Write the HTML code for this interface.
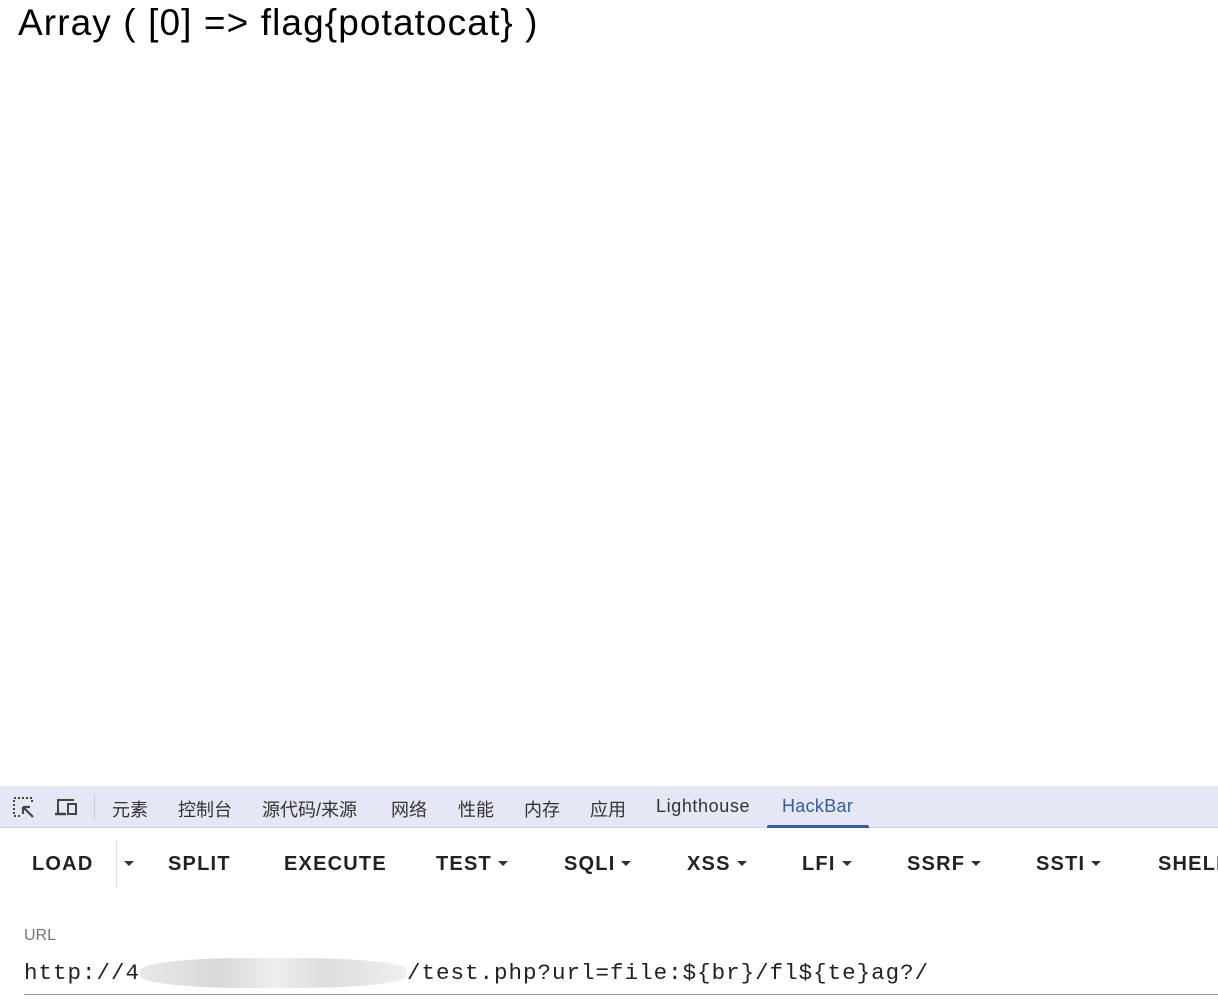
<!DOCTYPE html>
<html><head><meta charset="utf-8"><style>
body{margin:0;width:1218px;height:1004px;background:#fff;position:relative;overflow:hidden;font-family:"Liberation Sans","Noto Sans CJK SC",sans-serif}
.a{position:absolute;white-space:nowrap}
#t{left:18px;top:2px;font-size:37px;color:#000;letter-spacing:1.1px}
#dt{left:0;top:786px;width:1218px;height:41px;background:#e4e8f4;border-bottom:1px solid #d0d4e0}
.tab{top:796px;font-size:18px;color:#333}
.btn{top:853px;font-size:20px;font-weight:bold;letter-spacing:1.2px;color:#222}
.car{display:inline-block;width:0;height:0;border-left:5px solid transparent;border-right:5px solid transparent;border-top:5px solid #333;vertical-align:middle;margin-left:6px;margin-bottom:3px}
</style></head><body>
<div class="a" id="t">Array ( [0] =&gt; flag{potatocat} )</div>
<div class="a" id="dt"></div>
<svg class="a" style="left:12px;top:796px" width="26" height="22" viewBox="0 0 26 22"><rect x="2" y="2" width="18" height="18" fill="none" stroke="#444" stroke-width="2" stroke-dasharray="2 2"/><rect x="8" y="8" width="14" height="14" fill="#e4e8f4"/><path d="M11 11 L21 21 M11 11 V18 M11 11 H18" stroke="#444" stroke-width="2.2" fill="none"/></svg>
<svg class="a" style="left:54px;top:796px" width="26" height="22" viewBox="0 0 26 22"><path d="M4 17 V4 H20" stroke="#444" stroke-width="2" fill="none"/><path d="M1 18 H12" stroke="#444" stroke-width="2.5"/><rect x="14" y="8" width="8" height="10" fill="none" stroke="#444" stroke-width="2"/></svg>
<div class="a" style="left:94px;top:794px;width:1px;height:26px;background:#c8ccd8"></div>
<div class="a tab" style="left:112px">元素</div>
<div class="a tab" style="left:178px">控制台</div>
<div class="a tab" style="left:262px">源代码/来源</div>
<div class="a tab" style="left:391px">网络</div>
<div class="a tab" style="left:458px">性能</div>
<div class="a tab" style="left:524px">内存</div>
<div class="a tab" style="left:590px">应用</div>
<div class="a tab" style="left:656px;letter-spacing:0.6px">Lighthouse</div>
<div class="a tab" style="left:782px;color:#3c5a9a;letter-spacing:0.3px">HackBar</div>
<div class="a" style="left:767px;top:825px;width:102px;height:3px;background:#3c5a9a;border-radius:2px 2px 0 0"></div>
<div class="a btn" style="left:32px">LOAD</div>
<div class="a" style="left:116px;top:840px;width:1px;height:48px;background:#ddd"></div>
<div class="a btn" style="left:118px"><span class="car"></span></div>
<div class="a btn" style="left:168px">SPLIT</div>
<div class="a btn" style="left:284px">EXECUTE</div>
<div class="a btn" style="left:436px">TEST<span class="car"></span></div>
<div class="a btn" style="left:564px">SQLI<span class="car"></span></div>
<div class="a btn" style="left:687px">XSS<span class="car"></span></div>
<div class="a btn" style="left:802px">LFI<span class="car"></span></div>
<div class="a btn" style="left:907px">SSRF<span class="car"></span></div>
<div class="a btn" style="left:1036px">SSTI<span class="car"></span></div>
<div class="a btn" style="left:1158px">SHELL</div>
<div class="a" style="left:24px;top:927px;font-size:16px;color:#777">URL</div>
<div class="a" style="left:24px;top:958px;font-family:'Liberation Mono',monospace;font-size:22.5px;color:#222;letter-spacing:1px">http://4<span style="display:inline-block;width:267px;height:30px;vertical-align:middle;background:linear-gradient(90deg,#e8e8e8,#d8d8d8 30%,#eee 50%,#ddd 70%,#f0f0f0);border-radius:40%"></span>/test.php?url=file:${br}/fl${te}ag?/</div>
<div class="a" style="left:24px;top:994px;width:1194px;height:1px;background:#999"></div>
</body></html>
